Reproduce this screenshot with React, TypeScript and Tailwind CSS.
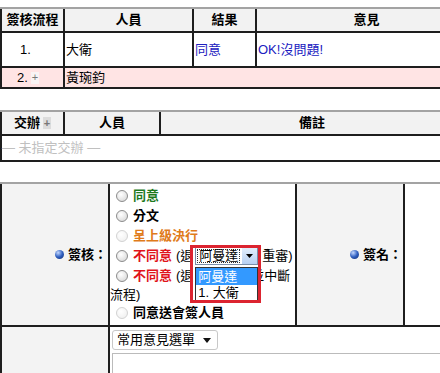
import React from "react";

const Radio = ({ dim }: { dim?: boolean }) => (
  <span
    className={`ml-[6px] mr-[5px] inline-block h-[12px] w-[12px] shrink-0 rounded-full border ${
      dim
        ? "border-[#d2d2d2] bg-[radial-gradient(circle_at_40%_35%,#ffffff,#ededed)]"
        : "border-[#8c8c8c] bg-[radial-gradient(circle_at_40%_35%,#ffffff,#d2d2d2)]"
    }`}
  />
);

const Bullet = () => (
  <span className="mr-[4px] inline-block h-[9px] w-[9px] rounded-full bg-[radial-gradient(circle_at_35%_30%,#c4d8ff,#2f5fc0_50%,#0f2a6e)]" />
);

const Plus = ({ bg }: { bg: string }) => (
  <span className={`ml-[3px] inline-flex h-[12px] w-[8px] items-center justify-center text-[11px] leading-none text-[#777] ${bg}`}>
    +
  </span>
);

export default function App() {
  return (
    <div className="h-[373px] w-[440px] overflow-hidden bg-white font-['Liberation_Sans','Noto_Sans_CJK_TC',sans-serif] text-[13px] text-black">
      {/* 簽核流程 */}
      <div className="mt-[7px] grid w-[476px] grid-cols-[61px_127px_61px_1fr] gap-[2px] border-t-2 border-[#a3a3a3] bg-[#1e1e1e] pb-[2px] pl-[2px]">
        <div className="flex h-[22px] items-center justify-center bg-[#f2f2f2] font-bold">簽核流程</div>
        <div className="flex h-[22px] items-center justify-center bg-[#f2f2f2] font-bold">人員</div>
        <div className="flex h-[22px] items-center justify-center bg-[#f2f2f2] font-bold">結果</div>
        <div className="flex h-[22px] items-center justify-center bg-[#f2f2f2] font-bold">意見</div>

        <div className="flex h-[33px] items-center bg-white pl-[18px]">1.</div>
        <div className="flex h-[33px] items-center bg-white pl-[1px]">大衛</div>
        <div className="flex h-[33px] items-center bg-white pl-[1px] text-[#2020c0]">同意</div>
        <div className="flex h-[33px] items-center bg-white pl-[1px] text-[#2020c0]">OK!沒問題!</div>

        <div className="flex h-[19px] items-center bg-[#ffe4e4] pl-[15px]">
          2.<Plus bg="bg-[#f9f4f4]" />
        </div>
        <div className="col-span-3 flex h-[19px] items-center bg-[#ffe4e4] pl-[1px]">黃琬鈞</div>
      </div>

      {/* 交辦 */}
      <div className="mt-[21px] grid w-[463px] grid-cols-[61px_94px_1fr] gap-[2px] border-t-2 border-[#a3a3a3] bg-[#1e1e1e] pb-[2px] pl-[2px]">
        <div className="flex h-[22px] items-center justify-center bg-[#f2f2f2] font-bold">
          交辦<Plus bg="bg-[#dcdcdc]" />
        </div>
        <div className="flex h-[22px] items-center justify-center bg-[#f2f2f2] font-bold">人員</div>
        <div className="flex h-[22px] items-center justify-center bg-[#f2f2f2] font-bold">備註</div>
        <div className="col-span-3 flex h-[24px] items-center bg-white text-[#c0c0c0]">— 未指定交辦 —</div>
      </div>

      {/* 簽核 / 簽名 */}
      <div className="mt-[20px] grid w-[480px] grid-cols-[106px_185px_106px_1fr] gap-[2px] border-t-2 border-[#a3a3a3] bg-[#1e1e1e] pl-[2px]">
        <div className="flex h-[141px] items-center justify-end bg-[#f3f3f3] pr-[1px] font-bold">
          <Bullet />
          簽核：
        </div>
        <div className="bg-white pt-[2px]">
          <div className="flex h-[20px] items-center">
            <Radio />
            <span className="font-bold text-[#1d7a1d]">同意</span>
          </div>
          <div className="flex h-[20px] items-center">
            <Radio />
            <span className="font-bold">分文</span>
          </div>
          <div className="flex h-[20px] items-center">
            <Radio dim />
            <span className="font-bold text-[#e07b1a]">呈上級決行</span>
          </div>
          <div className="flex h-[20px] items-center whitespace-nowrap">
            <Radio />
            <span className="font-bold text-[#e0141b]">不同意</span>
            <span className="ml-[4px]">(退</span>
            <span className="relative ml-[2px] flex h-[18px] w-[63px] items-center border border-[#7a8ea8] bg-white">
              <span className="ml-[1px] flex h-[14px] items-center border border-dotted border-[#333] px-[1px] text-[13px]">阿曼達</span>
              <span className="ml-auto flex h-[16px] w-[15px] items-center justify-center bg-[linear-gradient(#e2eefc,#b7d0f2)]">
                <svg width="7" height="4" viewBox="0 0 7 4">
                  <path d="M0 0h7L3.5 4z" fill="#000" />
                </svg>
              </span>
              <span className="absolute left-[-1px] top-[19px] z-10 w-[63px] border border-[#333] bg-white">
                <span className="flex h-[17px] items-center bg-[#3399ff] pl-[2px] text-white">阿曼達</span>
                <span className="flex h-[16px] items-center pl-[2px]">1. 大衛</span>
              </span>
              <span className="absolute left-[-6px] top-[-3px] z-20 h-[58px] w-[71px] border-[3px] border-[#dc2430]" />
            </span>
            <span className="ml-[4px]">重審)</span>
          </div>
          <div className="flex h-[20px] items-center whitespace-nowrap">
            <Radio />
            <span className="font-bold text-[#e0141b]">不同意</span>
            <span className="ml-[4px]">(退</span>
            <span className="ml-[2px] inline-block w-[56px]" />
            <span>並中斷</span>
          </div>
          <div className="flex h-[17px] items-center">流程)</div>
          <div className="flex h-[20px] items-center">
            <Radio dim />
            <span className="font-bold">同意送會簽人員</span>
          </div>
        </div>
        <div className="flex h-[141px] items-center justify-end bg-[#f3f3f3] pr-[1px] font-bold">
          <Bullet />
          簽名：
        </div>
        <div className="bg-white" />

        <div className="h-[60px] bg-[#f3f3f3]" />
        <div className="col-span-3 h-[60px] bg-white pl-[2px] pt-[3px]">
          <div className="flex h-[20px] w-[106px] items-center rounded-[3px] border border-[#c8c8c8] bg-white pl-[4px]">
            常用意見選單
            <svg className="ml-auto mr-[6px]" width="8" height="5" viewBox="0 0 8 5">
              <path d="M0 0h8L4 5z" fill="#111" />
            </svg>
          </div>
          <div className="mt-[3px] h-[40px] border border-[#bbb] bg-white" />
        </div>
      </div>
    </div>
  );
}
